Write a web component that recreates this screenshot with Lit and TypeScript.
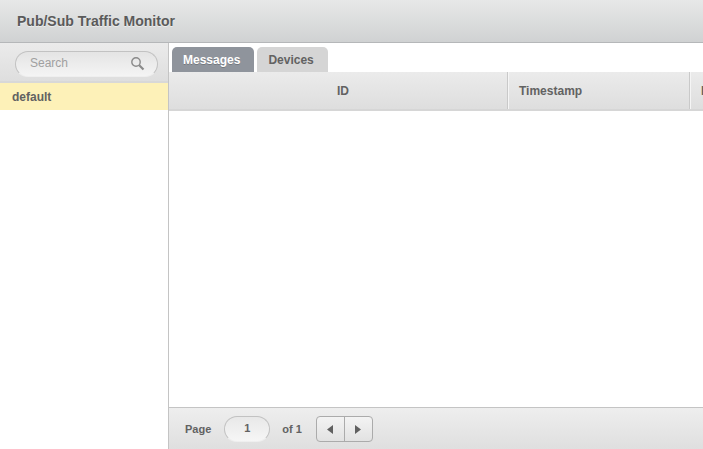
import { LitElement, html, css } from "lit";
import { customElement } from "lit/decorators.js";

@customElement("app-root")
export class AppRoot extends LitElement {
  static styles = css`
    :host {
      display: flex;
      flex-direction: column;
      width: 703px;
      height: 449px;
      overflow: hidden;
      font-family: "Liberation Sans", Arial, sans-serif;
      font-size: 12px;
      font-weight: 700;
      color: #626262;
      background: #fff;
    }
    .top {
      height: 42px;
      flex: none;
      box-sizing: content-box;
      border-bottom: 1px solid #b5b7b9;
      background: linear-gradient(#e7e8e8, #d0d2d3);
      display: flex;
      align-items: center;
      padding-left: 17px;
      font-size: 14px;
      color: #5a5a5a;
      text-shadow: 0 1px 0 rgba(255, 255, 255, 0.5);
    }
    .body { flex: 1; display: flex; min-height: 0; }
    .side {
      width: 168px;
      flex: none;
      border-right: 1px solid #c4c4c4;
      display: flex;
      flex-direction: column;
    }
    .searchbar {
      height: 40px;
      flex: none;
      box-sizing: border-box;
      background: linear-gradient(#ebebeb, #dedede);
      border-bottom: 2px solid #d8d8d8;
      padding: 8px 0 0 15px;
    }
    .search {
      width: 143px;
      height: 26px;
      box-sizing: border-box;
      border-radius: 13px;
      border: 1px solid #c2c2c2;
      border-bottom-color: #efefef;
      background: linear-gradient(#e4e4e4, #f4f4f4);
      display: flex;
      align-items: center;
      justify-content: space-between;
      padding: 0 12px 2px 14px;
      font-size: 12px;
      font-weight: 400;
      color: #a0a0a0;
    }
    .search svg { display: block; }
    .item {
      height: 27px;
      flex: none;
      box-sizing: border-box;
      background: #fdf1b8;
      display: flex;
      align-items: center;
      padding-left: 12px;
    }
    .main { flex: 1; min-width: 0; display: flex; flex-direction: column; }
    .tabs {
      height: 29px;
      flex: none;
      box-sizing: border-box;
      display: flex;
      align-items: flex-end;
      gap: 3px;
      padding-left: 3px;
    }
    .tab {
      height: 25px;
      box-sizing: border-box;
      border-radius: 5px 5px 0 0;
      padding: 0 14px 0 11px;
      display: flex;
      align-items: center;
      background: #d5d5d5;
    }
    .tab.on {
      background: #8f949c;
      color: #fff;
      text-shadow: 0 1px 0 rgba(0, 0, 0, 0.2);
    }
    .thead {
      height: 39px;
      flex: none;
      box-sizing: border-box;
      display: flex;
      background: linear-gradient(#ebebeb, #dedede);
      border-bottom: 2px solid #d6d6d6;
      overflow: hidden;
    }
    .col {
      flex: none;
      box-sizing: border-box;
      display: flex;
      align-items: center;
      border-right: 1px solid #c9c9c9;
      box-shadow: 1px 0 0 #f5f5f5;
      margin-right: 1px;
      padding-left: 10px;
      white-space: nowrap;
    }
    .col.id { width: 339px; justify-content: center; padding-left: 10px; }
    .col.ts { width: 181px; }
    .col.more { width: 200px; border-right: none; box-shadow: none; }
    .rows { flex: 1; background: #fff; }
    .foot {
      height: 42px;
      flex: none;
      box-sizing: border-box;
      border-top: 1px solid #c4c4c4;
      background: linear-gradient(#eeeeee, #dfdfdf);
      display: flex;
      align-items: center;
      padding: 1px 0 0 16px;
      font-size: 11px;
    }
    .page {
      width: 46px;
      height: 26px;
      box-sizing: border-box;
      margin: 0 12px 0 13px;
      border-radius: 13px;
      border: 1px solid #c2c2c2;
      border-bottom-color: #efefef;
      background: linear-gradient(#e8e8e8, #f6f6f6);
      display: flex;
      align-items: center;
      justify-content: center;
      padding-bottom: 3px;
    }
    .nav {
      margin-left: 14px;
      display: flex;
      width: 57px;
      height: 26px;
      box-sizing: border-box;
      border: 1px solid #ababab;
      border-radius: 4px;
      background: linear-gradient(#f3f3f3, #e2e2e2);
    }
    .nav div {
      flex: 1;
      display: flex;
      align-items: center;
      justify-content: center;
      padding-top: 1px;
    }
    .nav div + div { border-left: 1px solid #ababab; }
    .nav svg { display: block; fill: #606060; }
  `;

  render() {
    return html`
      <div class="top">Pub/Sub Traffic Monitor</div>
      <div class="body">
        <div class="side">
          <div class="searchbar">
            <div class="search">
              <span>Search</span>
              <svg width="15" height="15" viewBox="0 0 15 15" fill="none" stroke="#8a8a8a">
                <circle cx="6" cy="6" r="4.2" stroke-width="1.4"></circle>
                <path d="M9.2 9.2 L13.5 13.5" stroke-width="2.2"></path>
              </svg>
            </div>
          </div>
          <div class="item">default</div>
        </div>
        <div class="main">
          <div class="tabs">
            <div class="tab on">Messages</div>
            <div class="tab">Devices</div>
          </div>
          <div class="thead">
            <div class="col id">ID</div>
            <div class="col ts">Timestamp</div>
            <div class="col more">Payload</div>
          </div>
          <div class="rows"></div>
          <div class="foot">
            <span>Page</span>
            <div class="page">1</div>
            <span>of 1</span>
            <div class="nav">
              <div><svg width="6" height="9" viewBox="0 0 6 9"><path d="M6 0V9L0 4.5Z"></path></svg></div>
              <div><svg width="6" height="9" viewBox="0 0 6 9"><path d="M0 0V9L6 4.5Z"></path></svg></div>
            </div>
          </div>
        </div>
      </div>
    `;
  }
}
